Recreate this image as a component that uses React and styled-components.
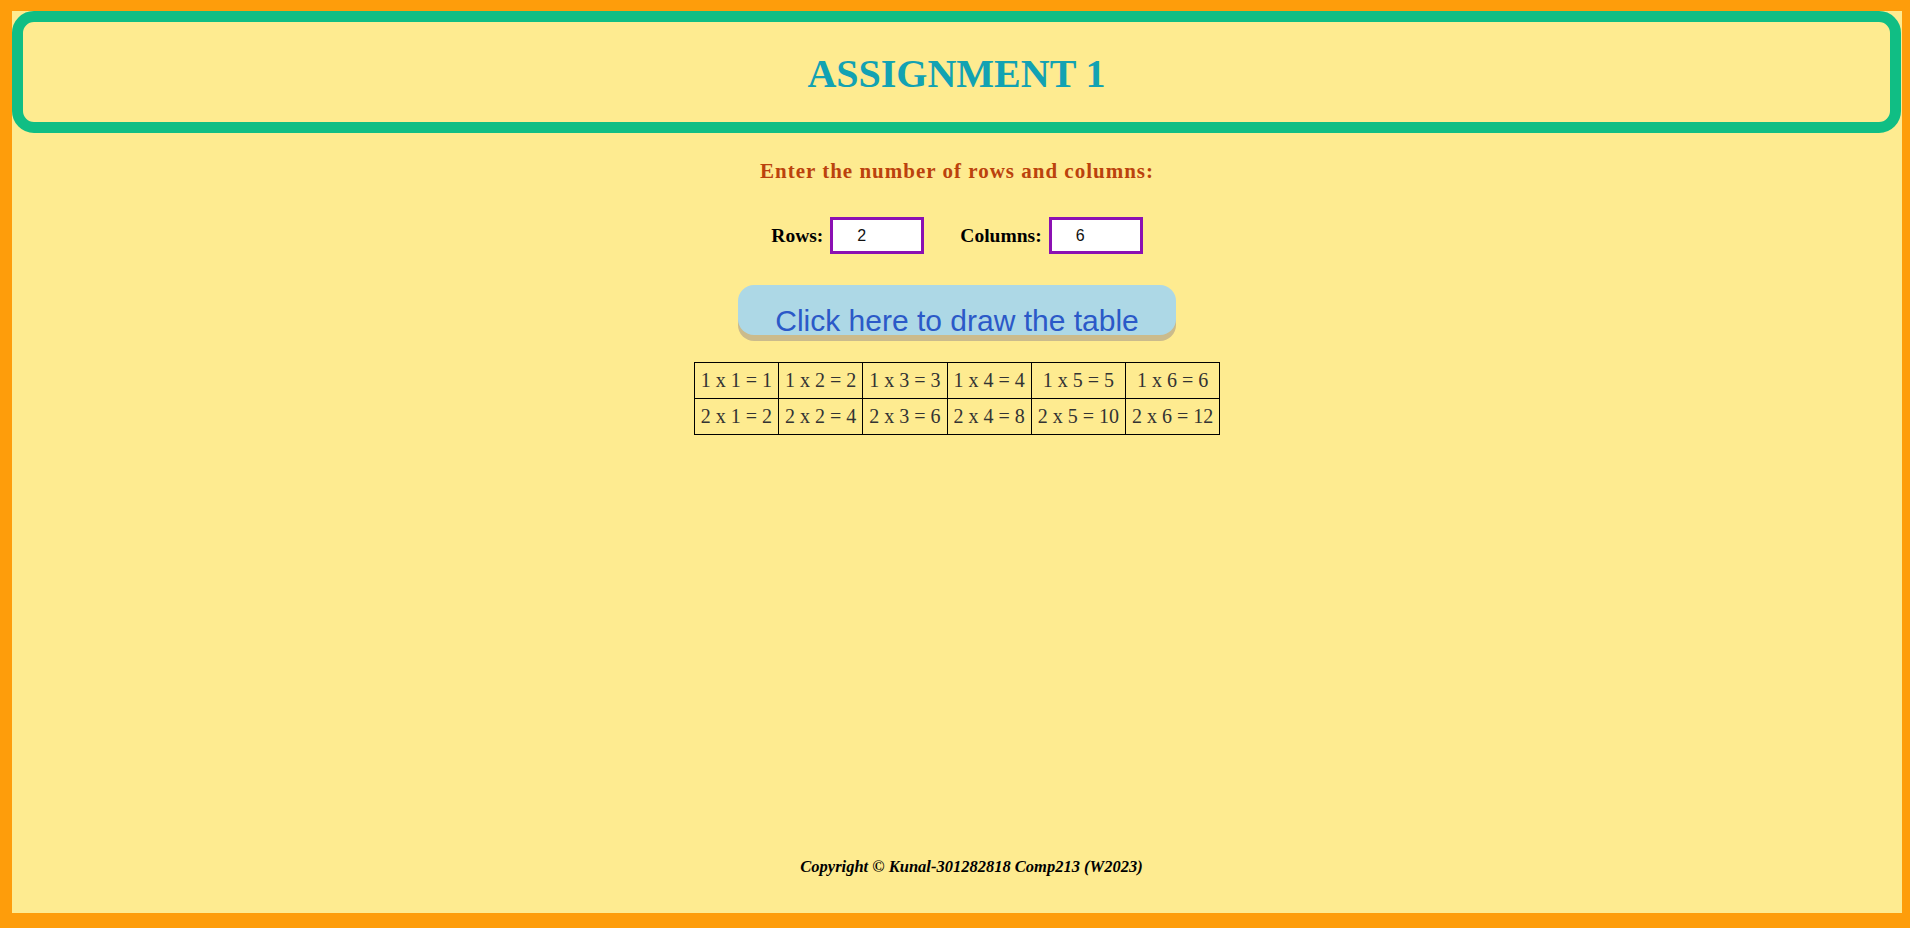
import React, { useState } from 'react';
import styled, { createGlobalStyle } from 'styled-components';

const GlobalStyle = createGlobalStyle`
  html, body {
    margin: 0;
    padding: 0;
  }
  body {
    font-family: "Liberation Serif", "Times New Roman", serif;
  }
`;

const Page = styled.div`
  min-height: 100vh;
  box-sizing: border-box;
  background: #feeb90;
  border-style: solid;
  border-color: #fe9d0b;
  border-width: 11px 8px 15px 12px;
  display: flex;
  flex-direction: column;
  align-items: center;
`;

const Header = styled.header`
  align-self: stretch;
  margin-right: 1px;
  height: 122px;
  box-sizing: border-box;
  border: 11px solid #10be84;
  border-radius: 22px;
  display: flex;
  align-items: center;
  justify-content: center;
`;

const Title = styled.h1`
  margin: 2px 0 0;
  font-size: 40px;
  font-weight: bold;
  color: #12a2b3;
`;

const Prompt = styled.h3`
  margin: 27px 0 0;
  font-size: 21px;
  line-height: 23px;
  letter-spacing: 1px;
  font-weight: bold;
  color: #bb420d;
`;

const Fields = styled.div`
  display: flex;
  align-items: center;
  margin-top: 34px;
`;

const Label = styled.label`
  font-size: 19.5px;
  font-weight: bold;
  color: #000;
  margin-right: 7px;
`;

const NumberInput = styled.input`
  width: 94px;
  height: 37px;
  box-sizing: border-box;
  border: 3px solid #8b10b3;
  background: #fff;
  padding: 0 0 0 24px;
  font-family: "Liberation Sans", Arial, sans-serif;
  font-size: 16px;
  color: #111;
  outline: none;
  margin-right: ${({ gap }) => gap || 0}px;
`;

const DrawButton = styled.button`
  margin-top: 31px;
  width: 438px;
  height: 50px;
  box-sizing: border-box;
  border: none;
  border-radius: 16px;
  background: #add8e6;
  box-shadow: 0 6px #cbbb8c;
  color: #2b59c8;
  font-family: "Liberation Sans", Arial, sans-serif;
  font-size: 30px;
  line-height: 34px;
  padding: 19px 0 0;
  text-align: center;
  cursor: pointer;
  overflow: visible;
`;

const Table = styled.table`
  margin-top: 27px;
  border-collapse: collapse;
  border: 1px solid #000;
`;

const Cell = styled.td`
  border: 1px solid #000;
  padding: 6px 6px;
  font-size: 20px;
  line-height: 23px;
  color: #333;
  text-align: center;
  white-space: nowrap;
`;

const Footer = styled.footer`
  margin-top: auto;
  padding: 0 0 36px 29px;
  font-size: 16.5px;
  font-weight: bold;
  font-style: italic;
  color: #000;
`;

export default function App() {
  const [rows, setRows] = useState('2');
  const [cols, setCols] = useState('6');
  const [table, setTable] = useState({ rows: 2, cols: 6 });

  const draw = () => {
    setTable({ rows: parseInt(rows, 10) || 0, cols: parseInt(cols, 10) || 0 });
  };

  return (
    <Page>
      <GlobalStyle />
      <Header>
        <Title>ASSIGNMENT 1</Title>
      </Header>
      <Prompt>Enter the number of rows and columns:</Prompt>
      <Fields>
        <Label htmlFor="rows">Rows:</Label>
        <NumberInput id="rows" gap={36} value={rows} onChange={e => setRows(e.target.value)} />
        <Label htmlFor="cols">Columns:</Label>
        <NumberInput id="cols" value={cols} onChange={e => setCols(e.target.value)} />
      </Fields>
      <DrawButton onClick={draw}>Click here to draw the table</DrawButton>
      <Table>
        <tbody>
          {Array.from({ length: table.rows }, (_, r) => (
            <tr key={r}>
              {Array.from({ length: table.cols }, (_, c) => (
                <Cell key={c}>
                  {r + 1} x {c + 1} = {(r + 1) * (c + 1)}
                </Cell>
              ))}
            </tr>
          ))}
        </tbody>
      </Table>
      <Footer>Copyright © Kunal-301282818 Comp213 (W2023)</Footer>
    </Page>
  );
}
